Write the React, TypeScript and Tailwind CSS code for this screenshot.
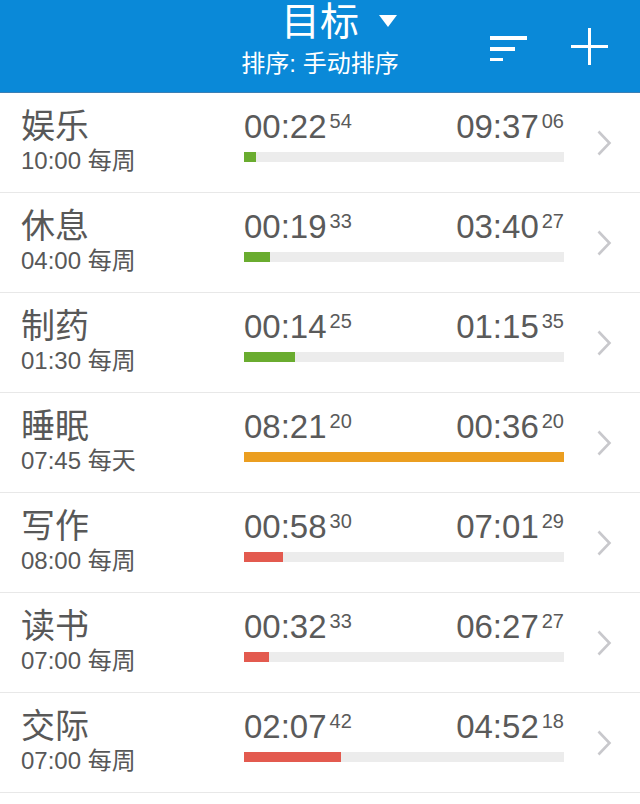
import React from "react";

type Goal = {
  name: string;
  target: string;
  period: string;
  done: [string, string];
  left: [string, string];
  pct: number;
  color: string;
};

const GOALS: Goal[] = [
  { name: "娱乐", target: "10:00", period: "每周", done: ["00:22", "54"], left: ["09:37", "06"], pct: 3.8, color: "bg-[#6aac2f]" },
  { name: "休息", target: "04:00", period: "每周", done: ["00:19", "33"], left: ["03:40", "27"], pct: 8.1, color: "bg-[#6aac2f]" },
  { name: "制药", target: "01:30", period: "每周", done: ["00:14", "25"], left: ["01:15", "35"], pct: 16, color: "bg-[#6aac2f]" },
  { name: "睡眠", target: "07:45", period: "每天", done: ["08:21", "20"], left: ["00:36", "20"], pct: 100, color: "bg-[#eb9e20]" },
  { name: "写作", target: "08:00", period: "每周", done: ["00:58", "30"], left: ["07:01", "29"], pct: 12.2, color: "bg-[#e35a4f]" },
  { name: "读书", target: "07:00", period: "每周", done: ["00:32", "33"], left: ["06:27", "27"], pct: 7.8, color: "bg-[#e35a4f]" },
  { name: "交际", target: "07:00", period: "每周", done: ["02:07", "42"], left: ["04:52", "18"], pct: 30.3, color: "bg-[#e35a4f]" },
];

const FONT = "font-['Helvetica_Neue','Liberation_Sans','Noto_Sans_CJK_SC',sans-serif]";

function Time({ value }: { value: [string, string] }) {
  return (
    <span className="flex items-start leading-none">
      <span className="text-[33px] leading-none">{value[0]}</span>
      <span className="text-[20px] leading-none ml-[3px] mt-[1px]">{value[1]}</span>
    </span>
  );
}

function GoalRow({ goal }: { goal: Goal }) {
  return (
    <div className="flex h-[100px] items-center border-b border-[#e8e8e8] bg-white">
      <div className="w-[244px] pl-[21px] -mt-[6px] text-[#585858]">
        <div className="text-[34px] leading-[40px]">{goal.name}</div>
        <div className="text-[24px] leading-[26px] mt-[2px]">
          {goal.target} {goal.period}
        </div>
      </div>
      <div className="w-[320px] -mt-[13px] text-[#5a5a5a]">
        <div className="flex justify-between">
          <Time value={goal.done} />
          <Time value={goal.left} />
        </div>
        <div className="mt-[9px] h-[10px] bg-[#ececec]">
          <div className={`h-full ${goal.color}`} style={{ width: `${goal.pct}%` }} />
        </div>
      </div>
      <div className="flex flex-1 justify-center pl-[4px]">
        <svg width="16" height="26" viewBox="0 0 16 26" fill="none">
          <path d="M2.5 1.5l11 11.5-11 11.5" stroke="#c8c8cc" strokeWidth="2.6" />
        </svg>
      </div>
    </div>
  );
}

export default function App() {
  return (
    <div className={`w-[640px] h-[804px] overflow-hidden bg-white ${FONT}`}>
      <div className="relative h-[93px] bg-[#0a89d8] border-b border-[#3a7fb5] text-white">
        <div className="flex flex-col items-center pt-[1px]">
          <div className="relative">
            <span className="text-[39px] leading-[42px]">目标</span>
            <svg className="absolute left-[100%] top-[14px] ml-[20px]" width="18" height="13" viewBox="0 0 18 13">
              <path d="M0 0h18L9 12z" fill="white" />
            </svg>
          </div>
          <div className="mt-[7px] text-[24px] leading-[28px]">排序: 手动排序</div>
        </div>
        <div className="absolute right-[32px] top-[28px] flex items-center gap-[44px]">
          <svg width="37" height="28" viewBox="0 0 37 28">
            <rect x="0" y="3" width="37" height="4" fill="white" />
            <rect x="0" y="14" width="25" height="4" fill="white" />
            <rect x="0" y="25" width="13" height="3" fill="white" />
          </svg>
          <svg width="37" height="37" viewBox="0 0 37 37">
            <rect x="17" y="0" width="3" height="37" fill="white" />
            <rect x="0" y="17" width="37" height="3" fill="white" />
          </svg>
        </div>
      </div>
      {GOALS.map((g) => (
        <GoalRow key={g.name} goal={g} />
      ))}
    </div>
  );
}
